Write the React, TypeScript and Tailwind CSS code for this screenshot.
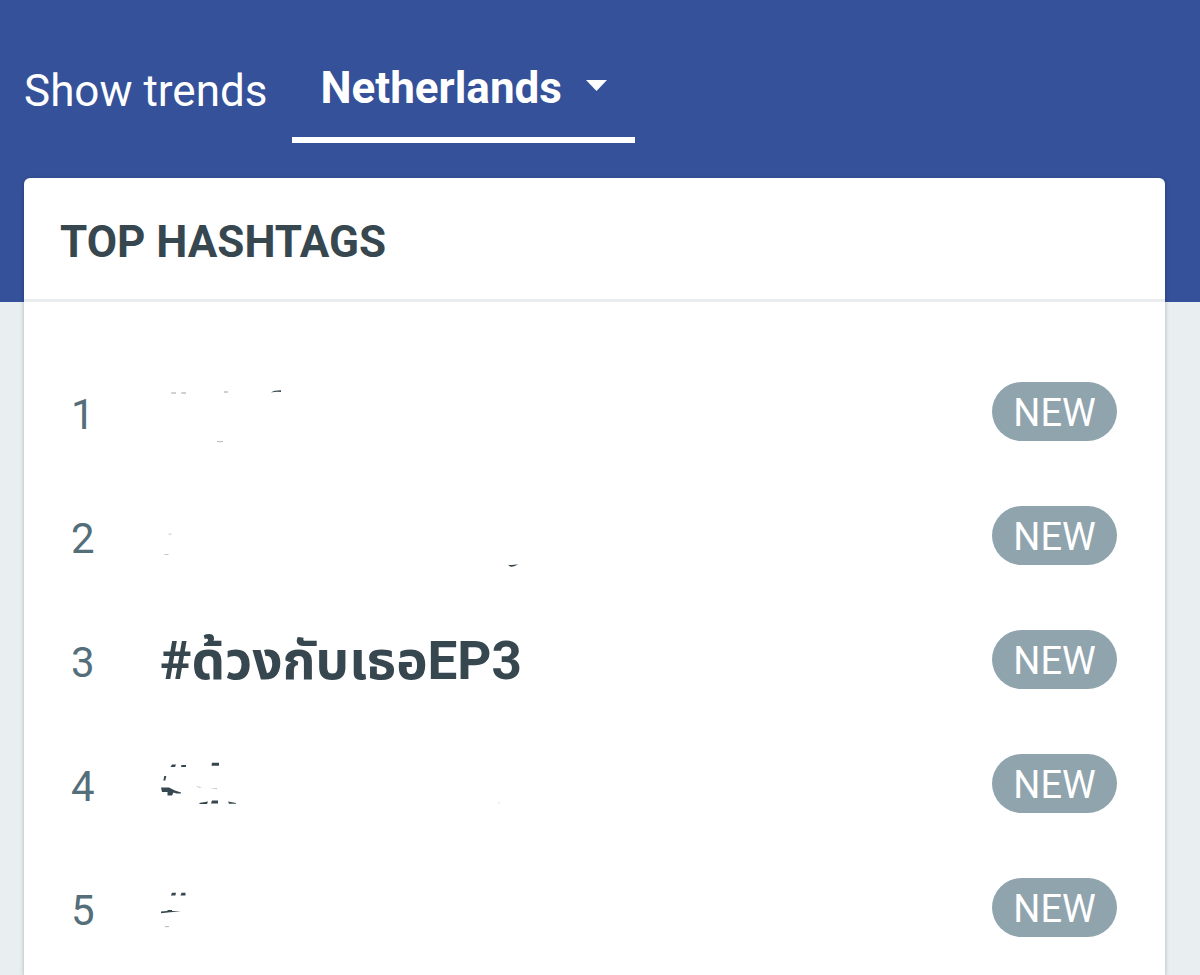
import type { ReactNode } from 'react';

interface Trend {
  rank: number;
  label: ReactNode;
}

// Leftover ink of the names that have been wiped out
function Marks({ children }: { children: ReactNode }) {
  return (
    <svg width="380" height="124" viewBox="0 0 380 124" fill="#37474f" aria-hidden="true">
      {children}
    </svg>
  );
}

const trends: Trend[] = [
  {
    rank: 1,
    label: (
      <Marks>
        <path d="M11.500 43.500 h4.500 v1 h-5z M21.500 43.500 h4.500 v1 h-5z M64 42.500 h4 v1 h-4z" opacity=".5" />
        <path d="M111 43.400 q3 -2.200 10 -2.200 v1.800 q-5 -.4 -10 .4z" />
        <path d="M57 92 q3 1 6 0 v.8 q-3 .8 -6 0z" opacity=".6" />
      </Marks>
    ),
  },
  {
    rank: 2,
    label: (
      <Marks>
        <path d="M8.500 60.800 h3 v.7 h-3z M4.500 81.300 h4 v.8 h-4z" opacity=".4" />
        <path d="M348 91.800 q4 .8 10 -.5 q-4 3.200 -8 2.200z" />
      </Marks>
    ),
  },
  { rank: 3, label: <p className="pt-1">#ด้วงกับเธอEP3</p> },
  {
    rank: 4,
    label: (
      <Marks>
        <path d="M12 43.500 h4 l-1 2.500 h-4.500z M21.500 44 h4.500 v2 h-5z M52 41.800 h7 v3 h-7.500z" />
        <path d="M4.300 55 h2 l-1 4.500 h-2z M1 66.500 h8 l6 3 6 2 v1 h-4.500 l-3 -1 -1.500 3 h-4.500 v-3.500 h-5.500z" />
        <path d="M36 65 l6 1.500 h-3z M50 67 l7 .2 v.8z" opacity=".5" />
        <path d="M39 82 l9 -1.500 -1 2.500 h-7z M52 79.500 h6 v3 h-7z M68 80.500 l8 1.500 v.8 h-7z" />
        <path d="M338 81.500 h2 v.8 h-2z" opacity=".2" />
      </Marks>
    ),
  },
  {
    rank: 5,
    label: (
      <Marks>
        <path d="M12 47.800 h4 l-.6 2.800 h-4.500z M21.500 47.800 h4 v2.800 h-5z" />
        <path d="M1 66.500 l6 -.6 1 -1 h4 v1 l9 .5 -11 .9 -9 1z" />
        <path d="M5 81.300 h4 v.8 h-4z" opacity=".5" />
      </Marks>
    ),
  },
];

function TrendRow({ rank, label }: Trend) {
  return (
    <li className="flex h-[124px] items-center">
      <span className="w-[89px] pt-2 text-[42px] leading-[52px] text-[#546e7a]">{rank}</span>
      <div className="flex-1 font-[Roboto,'Noto_Sans_Thai','Noto_Sans',sans-serif] text-[53px] leading-[72px] font-bold whitespace-nowrap text-[#37474f]">
        {label}
      </div>
      <span className="flex h-[59px] w-[125px] items-center justify-center rounded-full bg-[#90a4ae] pt-1 text-[38px] leading-none text-white">
        NEW
      </span>
    </li>
  );
}

export default function App() {
  return (
    <div className="flex min-h-screen flex-col bg-[#e9eef1] font-[Roboto,sans-serif]">
      <header className="flex items-center gap-[25px] bg-[#34519a] px-6 pt-[39px] pb-[159px]">
        <label htmlFor="country" className="text-[44px] leading-[52px] text-white">
          Show trends
        </label>
        <div className="relative">
          <select
            id="country"
            defaultValue="nl"
            className="h-[104px] w-[343px] appearance-none border-b-6 border-white bg-transparent pl-7 text-[44px] font-bold text-white outline-none"
          >
            <option value="nl">Netherlands</option>
          </select>
          <svg
            className="pointer-events-none absolute top-[41px] right-7"
            width="21"
            height="11"
            viewBox="0 0 21 11"
            fill="#fff"
            aria-hidden="true"
          >
            <path d="M0 0h21L10.500 11z" />
          </svg>
        </div>
      </header>

      <main className="-mt-[124px] flex flex-1 flex-col pr-[35px] pl-6">
        <section className="flex-1 rounded-t-md bg-white shadow-[0_1px_4px_rgba(0,0,0,0.25)]">
          <h1 className="h-[124px] border-b-3 border-[#e9edf0] px-9 pt-[38px] text-[44px] leading-[52px] font-bold text-[#37474f]">
            TOP HASHTAGS
          </h1>
          <ol className="pt-[47px] pr-12 pl-[47px]">
            {trends.map((trend) => (
              <TrendRow key={trend.rank} {...trend} />
            ))}
          </ol>
        </section>
      </main>
    </div>
  );
}
